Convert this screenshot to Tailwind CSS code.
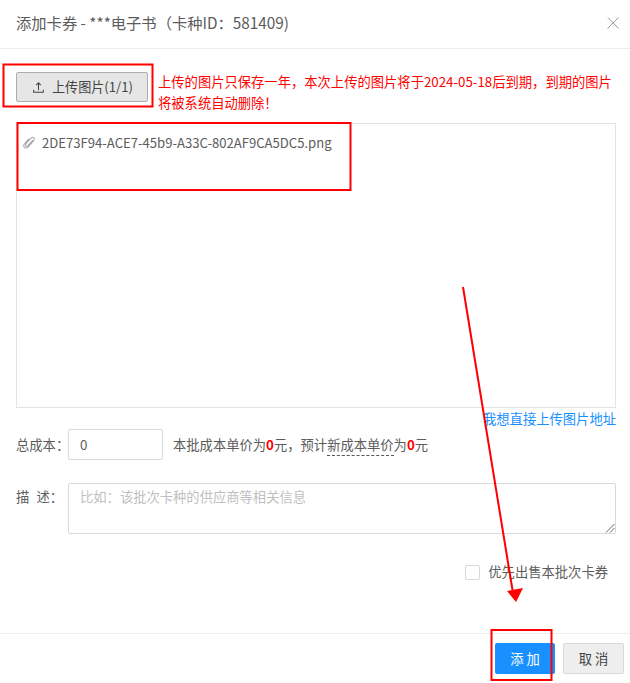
<!DOCTYPE html>
<html lang="zh">
<head>
<meta charset="utf-8">
<title>添加卡券</title>
<script src="https://cdn.jsdelivr.net/npm/@tailwindcss/browser@4"></script>
</head>
<body class="bg-white">
<div class="relative w-[630px] h-[683px] overflow-hidden bg-white text-[#5c5c5c] text-[13.3px] font-['Noto_Sans_CJK_SC',sans-serif]">

    <!-- header -->
    <div class="h-[49px] flex items-center justify-between pl-4 pr-[10px] border-b border-[#eee] pb-[3px]">
        <span class="text-[15.3px] text-[#5c5c5c]">添加卡券 - ***电子书（卡种ID：581409)</span>
        <svg class="w-3 h-3 text-[#999] mr-[1px]" viewBox="0 0 12 12" fill="none" stroke="currentColor" stroke-width="1">
            <path d="M1 .5l10.500 11M11.500 .5L.5 11.500"/>
        </svg>
    </div>

    <div class="pl-4">
        <!-- upload row -->
        <div class="flex items-start gap-[10px] pt-[23px]">
            <button class="shrink-0 w-[132px] h-[30px] flex items-center pl-[15px] gap-[7px] bg-[#e6e6e6] border border-[#adadad] rounded-[2px] text-[#444] text-[13.1px]">
                <svg class="w-[13px] h-[13px]" viewBox="0 0 14 14" fill="none" stroke="currentColor" stroke-width="1.1">
                    <path d="M7 10V2.200M4.600 4.500L7 2l2.400 2.500M1.800 9.500v2.600h10.400V9.500"/>
                </svg>
                <span>上传图片(1/1)</span>
            </button>
            <p class="w-[458px] -mt-[1px] leading-[21px] text-[#f00]">上传的图片只保存一年，本次上传的图片将于2024-05-18后到期，到期的图片将被系统自动删除！</p>
        </div>

        <!-- file list -->
        <div class="mt-[10px] w-[600px] h-[285px] border border-[#e4e4e4] pt-[9px] pl-[6px]">
            <div class="flex items-center gap-[7px] text-[13.1px]">
                <svg class="w-[12px] h-[13px] text-[#aaa]" viewBox="0 0 12 13" fill="none" stroke="currentColor" stroke-width="1.100">
                    <path d="M9.800 4.200L5 9.600c-.7.8-1.700.8-2.200.3-.6-.6-.5-1.400.2-2.200l4.800-5.400c1-1.100 2.200-1.200 3-.5.8.7.7 2-.3 3.100L5.400 10.600c-1.300 1.400-3 1.600-4 .7-1-.9-.9-2.400.3-3.800L6 2.700"/>
                </svg>
                <span>2DE73F94-ACE7-45b9-A33C-802AF9CA5DC5.png</span>
            </div>
        </div>
        <div class="w-[600px] h-[21px] text-right leading-[21px] text-[#1890ff]">我想直接上传图片地址</div>

        <!-- cost row -->
        <div class="flex items-center h-[31px]">
            <span class="w-[52px] shrink-0 whitespace-nowrap">总成本：</span>
            <div class="w-[95px] h-[31px] flex items-center pl-[11px] border border-[#d9d9d9] rounded-[2px]">0</div>
            <span class="ml-[10px]">本批成本单价为<b class="text-[#f00] font-bold">0</b>元，预计<span class="border-b border-dashed border-[#555] pb-[1px]">新成本单价</span>为<b class="text-[#f00] font-bold">0</b>元</span>
        </div>

        <!-- description -->
        <div class="flex items-start mt-[23px]">
            <div class="w-[52px] shrink-0 flex justify-between pr-[5px] pt-[3px] leading-[21px]"><span>描</span><span>述：</span></div>
            <div class="relative w-[548px] h-[51px] border border-[#d9d9d9] rounded-[2px] pl-[11px] pt-[2px] leading-[21px] text-[#bfbfbf]">
                比如：该批次卡种的供应商等相关信息
                <svg class="absolute right-0 bottom-0 w-[10px] h-[10px] text-[#666]" viewBox="0 0 10 10" fill="none" stroke="currentColor" stroke-width="1">
                    <path d="M1 9.500L9.500 1M5 9.500L9.500 5"/>
                </svg>
            </div>
        </div>

        <!-- priority checkbox -->
        <div class="flex items-center justify-end gap-[8px] mt-[30px] w-[592px] h-[16px]">
            <span class="w-[15px] h-[15px] border border-[#d9d9d9] rounded-[2px]"></span>
            <span class="whitespace-nowrap">优先出售本批次卡券</span>
        </div>
    </div>

    <!-- footer -->
    <div class="mt-[53px] border-t border-[#eee] flex justify-end gap-2 pt-[9px] pr-[6px]">
        <button class="w-[60px] h-[31px] bg-[#1890ff] rounded-[2px] text-white">添 加</button>
        <button class="w-[61px] h-[31px] bg-[#eee] border border-[#d9d9d9] rounded-[2px] text-[#444]">取 消</button>
    </div>

    <!-- screenshot annotations -->
    <svg class="absolute inset-0 w-[630px] h-[683px] pointer-events-none" viewBox="0 0 630 683" fill="none" stroke="#f00" stroke-width="2">
        <rect x="3.500" y="64.500" width="149" height="42"/>
        <rect x="17.500" y="123" width="333" height="67"/>
        <rect x="491.500" y="630" width="60" height="50"/>
        <path d="M463 287L512.500 590"/>
        <path d="M507 591L523 588L516 602Z" fill="#f00" stroke="none"/>
    </svg>
</div>
</body>
</html>
